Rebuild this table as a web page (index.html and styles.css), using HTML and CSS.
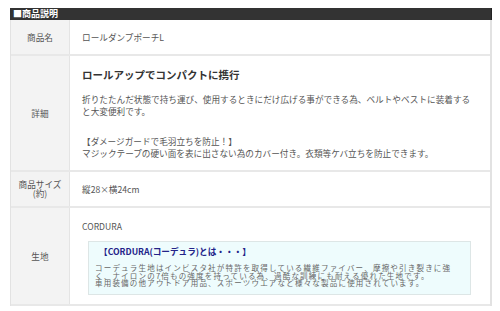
FILE: index.html
```html
<!DOCTYPE html>
<html lang="ja">
<head>
<meta charset="utf-8">
<link rel="stylesheet" href="styles.css">
</head>
<body>
<div class="wrap">
  <div class="head">■商品説明</div>
  <div class="spec">
    <div class="row r1">
      <div class="lab">商品名</div>
      <div class="val">ロールダンプポーチL</div>
    </div>
    <div class="row r2">
      <div class="lab">詳細</div>
      <div class="val">
        <div class="ttl">ロールアップでコンパクトに携行</div>
        <p class="p1">折りたたんだ状態で持ち運び、使用するときにだけ広げる事ができる為、ベルトやベストに装着する<br>と大変便利です。</p>
        <p class="p2">【ダメージガードで毛羽立ちを防止！】<br>マジックテープの硬い面を表に出さない為のカバー付き。衣類等ケバ立ちを防止できます。</p>
      </div>
    </div>
    <div class="row r3">
      <div class="lab two">商品サイズ<br>(約)</div>
      <div class="val">縦28×横24cm</div>
    </div>
    <div class="row r4">
      <div class="lab">生地</div>
      <div class="val">
        <div class="cord">CORDURA</div>
        <div class="box">
          <div class="btitle">【CORDURA(コーデュラ)とは・・・】</div>
          <div class="btext">コーデュラ生地はインビスタ社が特許を取得している繊維ファイバー、摩擦や引き裂きに強く、ナイロンの7倍もの強度を持っている為、過酷な訓練にも耐える優れた生地です。<br>車用装備の他アウトドア用品、スポーツウエアなど様々な製品に使用されています。</div>
        </div>
      </div>
    </div>
  </div>
</div>
</body>
</html>
```
FILE: styles.css
```css
html, body {
  margin: 0;
  padding: 0;
  background: #fff;
}
body {
  font-family: "Noto Sans CJK JP", "Noto Sans", sans-serif;
  color: #555;
  font-size: 8.65px;
}
.wrap {
  padding: 8px 8px 0 10px;
}
.head {
  background: #333;
  color: #fff;
  font-weight: bold;
  font-size: 9px;
  line-height: 12px;
  height: 12px;
  padding-left: 3px;
  border-right: 1px solid #222;
}
.spec {
  width: 482px;
  box-sizing: border-box;
  border-left: 1px solid #e2e2e2;
  border-right: 2px solid #e2e2e2;
}
.row {
  display: grid;
  grid-template-columns: 59px 1fr;
  border-bottom: 2px solid #e8e8e8;
  box-sizing: border-box;
}
.lab {
  background: #f3f3f3;
  border-right: 1px solid #e4e4e4;
  display: flex;
  align-items: center;
  justify-content: center;
  text-align: center;
  line-height: 12px;
}
.val {
  padding-left: 12px;
  line-height: 12px;
}
.r1 { height: 36px; }
.r1 .val, .r3 .val {
  display: flex;
  align-items: center;
}
.r2 { height: 116px; }
.r2 .val {
  padding-top: 12px;
}
.ttl {
  font-size: 10.5px;
  font-weight: bold;
  color: #333;
  line-height: 14px;
  margin-bottom: 11px;
}
.p1 {
  margin: 0 0 18px;
  white-space: nowrap;
}
.p2 {
  margin: 0;
}
.r3 { height: 36px; }
.two {
  line-height: 9px;
}
.r4 {
  height: 98px;
}
.r4 .val {
  padding-top: 12px;
}
.cord {
  line-height: 12px;
  margin-bottom: 9px;
}
.box {
  margin-left: 6px;
  width: 383px;
  height: 54px;
  box-sizing: border-box;
  background: #eefcfd;
  border: 1px solid #dde6e6;
  padding: 3px 6px 0 6px;
}
.btitle {
  color: #232389;
  font-weight: bold;
  font-size: 8.65px;
  line-height: 12px;
  padding-left: 4px;
  margin-bottom: 7px;
}
.btext {
  width: 362px;
  font-size: 7.5px;
  letter-spacing: 1.2px;
  line-height: 7.5px;
  color: #666;
}
```
